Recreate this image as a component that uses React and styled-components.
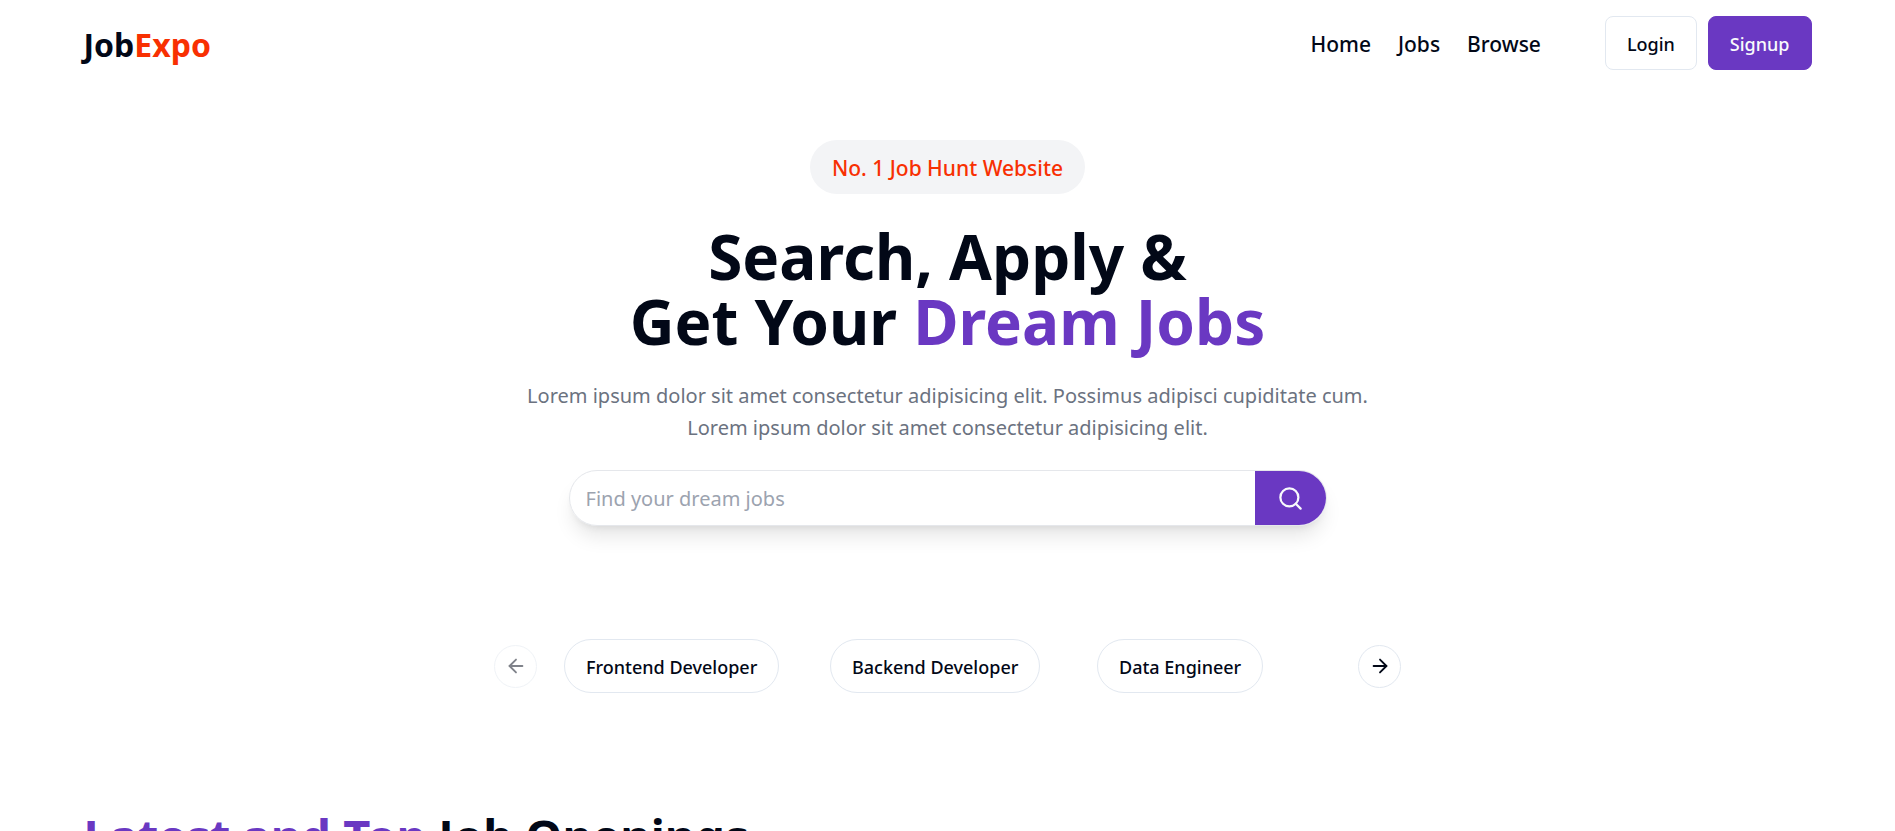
import React from "react";
import styled, { createGlobalStyle } from "styled-components";
import { Search, ArrowLeft, ArrowRight } from "lucide-react";

const GlobalStyle = createGlobalStyle`
  *, *::before, *::after { box-sizing: border-box; }
  html { scrollbar-width: none; }
  body {
    margin: 0;
    background: #fff;
    color: #020817;
    font-family: "Noto Sans", "Open Sans", sans-serif;
    font-size: 20px;
    line-height: 32px;
  }
  h1, h2, p { margin: 0; }
  a { color: inherit; text-decoration: none; }
  button, input { font: inherit; color: inherit; cursor: pointer; }
`;

const Container = styled.div`
  width: 100%;
  max-width: 1728px;
  margin: 0 auto;
`;

const Header = styled(Container)`
  display: flex;
  align-items: center;
  justify-content: space-between;
  height: 86px;
`;

const Logo = styled.a`
  padding-top: 4px;
  font-size: 32px;
  line-height: 44px;
  font-weight: 700;
`;

const Accent = styled.span`
  color: ${(p) => (p.$tone === "orange" ? "#f83002" : "#6a38c2")};
`;

const HeaderRight = styled.div`
  display: flex;
  align-items: center;
  gap: 64px;
`;

const Nav = styled.nav`
  display: flex;
  gap: 27px;
  padding-top: 2px;
  font-size: 21px;
  font-weight: 500;
`;

const Actions = styled.div`
  display: flex;
  gap: 11px;
`;

const Button = styled.button`
  height: 54px;
  padding: 2px 21px 0;
  border: 1px solid ${(p) => (p.$primary ? "#6a38c2" : "#e2e8f0")};
  border-radius: ${(p) => (p.$pill ? "27px" : "8px")};
  background: ${(p) => (p.$primary ? "#6a38c2" : "#fff")};
  color: ${(p) => (p.$primary ? "#f8fafc" : "#020817")};
  font-size: 18px;
  line-height: 27px;
  font-weight: 500;
  white-space: nowrap;
`;

const Hero = styled.section`
  display: flex;
  flex-direction: column;
  align-items: center;
  padding-top: 54px;
  text-align: center;
`;

const Badge = styled.span`
  padding: 12px 22px 10px;
  border-radius: 27px;
  background: #f3f4f6;
  color: #f83002;
  font-size: 21px;
  font-weight: 500;
`;

const Title = styled.h1`
  padding-top: 30px;
  font-size: 62px;
  line-height: 65px;
  font-weight: 700;
`;

const Lead = styled.p`
  max-width: 880px;
  padding: 26px 0;
  color: #6b7280;
`;

const SearchBar = styled.form`
  display: flex;
  width: 40%;
  height: 56px;
  padding-left: 16px;
  border: 1px solid #e5e7eb;
  border-radius: 28px;
  overflow: hidden;
  box-shadow: 0 14px 20px -4px rgb(0 0 0 / 0.1), 0 5px 8px -5px rgb(0 0 0 / 0.1);
`;

const SearchInput = styled.input`
  flex: 1;
  min-width: 0;
  padding: 2px 0 0;
  border: 0;
  outline: 0;
  background: transparent;
  cursor: text;
  &::placeholder { color: #9ca3af; opacity: 1; }
`;

const SearchButton = styled.button`
  display: grid;
  place-items: center;
  width: 71px;
  padding: 0;
  border: 0;
  background: #6a38c2;
  color: #f8fafc;
`;

const Carousel = styled.section`
  display: flex;
  align-items: center;
  gap: 27px;
  width: 100%;
  max-width: 907px;
  margin: 113px auto 0;
`;

const Track = styled.div`
  flex: 1;
  display: grid;
  grid-template-columns: 266px 267px 1fr;
  justify-items: start;
`;

const RoundButton = styled.button`
  display: grid;
  place-items: center;
  width: 43px;
  height: 43px;
  padding: 0;
  border: 1px solid #e2e8f0;
  border-radius: 50%;
  background: #fff;
  color: #020817;
  &:disabled { opacity: 0.5; }
`;

const Openings = styled(Container)`
  padding: 116px 0 54px;
`;

const SectionTitle = styled.h2`
  font-size: 47px;
  line-height: 54px;
  font-weight: 700;
`;

const categories = ["Frontend Developer", "Backend Developer", "Data Engineer"];

export default function App() {
  return (
    <>
      <GlobalStyle />
      <Header as="header">
        <Logo href="#">Job<Accent $tone="orange">Expo</Accent></Logo>
        <HeaderRight>
          <Nav>
            <a href="#home">Home</a>
            <a href="#jobs">Jobs</a>
            <a href="#browse">Browse</a>
          </Nav>
          <Actions>
            <Button type="button">Login</Button>
            <Button type="button" $primary>Signup</Button>
          </Actions>
        </HeaderRight>
      </Header>
      <main>
        <Hero>
          <Badge>No. 1 Job Hunt Website</Badge>
          <Title>
            Search, Apply &amp;<br />
            Get Your <Accent>Dream Jobs</Accent>
          </Title>
          <Lead>
            Lorem ipsum dolor sit amet consectetur adipisicing elit. Possimus adipisci cupiditate cum.<br />
            Lorem ipsum dolor sit amet consectetur adipisicing elit.
          </Lead>
          <SearchBar role="search">
            <SearchInput type="text" aria-label="Find your dream jobs" placeholder="Find your dream jobs" />
            <SearchButton type="button" aria-label="Search"><Search size={27} strokeWidth={2} /></SearchButton>
          </SearchBar>
        </Hero>
        <Carousel aria-label="Job categories">
          <RoundButton type="button" aria-label="Previous slide" disabled><ArrowLeft size={22} /></RoundButton>
          <Track>
            {categories.map((name) => (
              <Button type="button" key={name} $pill>{name}</Button>
            ))}
          </Track>
          <RoundButton type="button" aria-label="Next slide"><ArrowRight size={22} /></RoundButton>
        </Carousel>
        <Openings as="section">
          <SectionTitle><Accent>Latest and Top</Accent> Job Openings</SectionTitle>
        </Openings>
      </main>
    </>
  );
}
